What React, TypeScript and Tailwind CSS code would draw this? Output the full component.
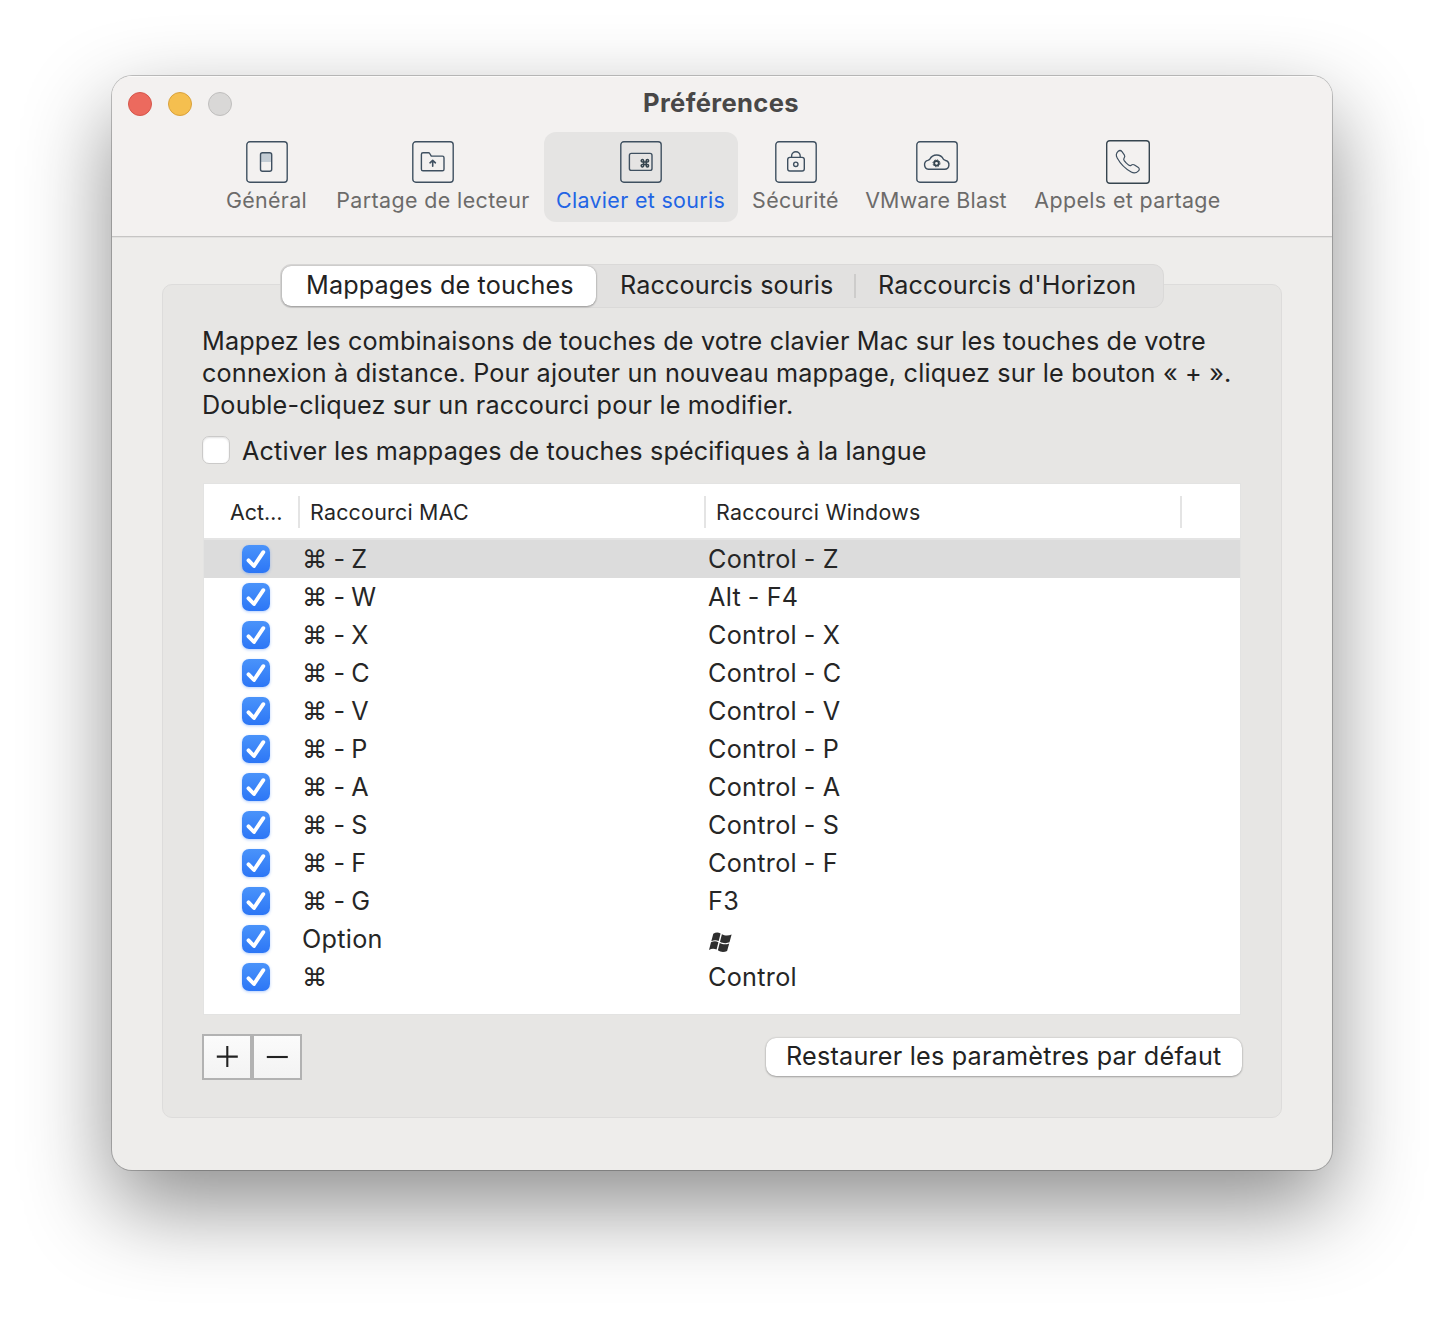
import type { ReactNode } from "react";

const INK = "#36454f";

function Box({ children }: { children: ReactNode }) {
  return (
    <svg width="42" height="42" viewBox="0 0 42 42" fill="none" stroke="#3f5060" strokeWidth="1.4" strokeLinecap="round" strokeLinejoin="round" className="block">
      <rect x="0.8" y="0.8" width="40.4" height="40.4" rx="3" />
      {children}
    </svg>
  );
}

function GeneralIcon() {
  return (
    <Box>
      <path d="M14.5 12h11v9h-11z" fill="#c3ccd4" stroke="none" />
      <rect x="14.5" y="11.8" width="11.2" height="18.4" rx="2" />
    </Box>
  );
}

function FolderIcon() {
  return (
    <Box>
      <path d="M9.4 28.2V13.4c0-1 .6-1.6 1.6-1.6h5.4c.5 0 1 .2 1.3.7l1.6 2.6h11.1c1 0 1.6.6 1.6 1.6v11.5c0 1-.6 1.6-1.6 1.6H11c-1 0-1.6-.6-1.6-1.6z" />
      <path d="M20.7 25.2v-5.4M18 21.8l2.7-2.5 2.7 2.5" strokeWidth="1.6" />
    </Box>
  );
}

function KeyboardIcon() {
  return (
    <Box>
      <rect x="9.4" y="12.4" width="22.6" height="17" rx="2" />
      <path
        d="M23.6 20.9h2.6v2.6h-2.6zM23.6 20.9h-1.1a1.2 1.2 0 1 1 1.1-1.2zM26.2 20.9v-1.2a1.2 1.2 0 1 1 1.2 1.2zM23.6 23.5v1.2a1.2 1.2 0 1 1-1.1-1.2zM26.2 23.5h1.2a1.2 1.2 0 1 1-1.2 1.2z"
        strokeWidth="1.5"
        stroke={INK}
      />
    </Box>
  );
}

function LockIcon() {
  return (
    <Box>
      <rect x="12.7" y="16.4" width="16.6" height="13.6" rx="2.2" />
      <path d="M16.6 16.2v-1.1a4.3 4.3 0 0 1 8.6 0v1.1" />
      <circle cx="20.8" cy="23.3" r="2.2" />
    </Box>
  );
}

function CloudIcon() {
  return (
    <Box>
      <path d="M12.4 28.3h16.3a4.5 4.5 0 0 0 1-8.8c-1.2-.5-1.7-.4-2.3-1.4a7.7 7.7 0 0 0-13.600.1c-.5.9-1.1.8-2.1 1.2a4.6 4.6 0 0 0 .7 8.9z" />
      <circle cx="20.5" cy="22.3" r="2.3" strokeWidth="1.8" stroke={INK} />
      <circle cx="20.5" cy="22.3" r="3.5" strokeWidth="1" strokeDasharray="1.4 1.35" strokeLinecap="butt" stroke={INK} />
    </Box>
  );
}

function PhoneIcon() {
  return (
    <svg width="44" height="44" viewBox="0 0 44 44" fill="none" stroke="#3f5060" strokeWidth="1.2" strokeLinejoin="round" className="block">
      <rect x="0.7" y="0.7" width="42.6" height="42.6" rx="3" strokeWidth="1.4" stroke={INK} />
      <path d="M12.2 11.2c1.5-1.1 2.9-.7 3.8.5l2.3 3.2c.8 1.2.6 2.2-.2 3.2-.7.9-.5 1.7.1 2.6 1.2 1.7 2.7 3.2 4.4 4.4.9.6 1.7.8 2.6.1 1-.8 2.1-1 3.3-.2l3.5 2.3c1.5 1 1.7 2.3.5 3.5-2.1 2.2-4.6 2.7-7.3 1.2-5.9-3.3-10.8-8.2-14-14-1.4-2.6-1-5 1-6.8z" />
    </svg>
  );
}

function WindowsIcon() {
  return (
    <svg width="23" height="21" viewBox="0 0 23 21" fill="#2e2e2e" className="block">
      <path d="M4.3 1.7C6.8.3 9.2.2 11.6 1.5L9.7 9.1C7.3 7.8 4.8 7.9 2.3 9.2z" />
      <path d="M12.9 2.3c2.7 1.5 6.3 1.9 9.7.2l-2.1 7.8c-2.500 1.200-6.700 1.200-9.500-.6z" />
      <path d="M2 10.3c2.6-1.3 5.1-1.3 7.4-.1l-1.8 7.4C5.2 16.3 2.5 16.4 0 17.9z" />
      <path d="M10.7 10.9c2.9 1.7 6.4 1.9 9.5.5l-2.1 7.5c-3 1.5-6.3 1.4-9.2-.6z" />
    </svg>
  );
}

type Tool = { label: string; icon: ReactNode; box: string; text: string; active?: boolean };

const TOOLS: Tool[] = [
  { label: "Général", icon: <GeneralIcon />, box: "w-[108px] mr-px pt-[9px]", text: "tracking-[0.32px] mt-1 mr-px" },
  { label: "Partage de lecteur", icon: <FolderIcon />, box: "w-[216px] pt-[9px]", text: "tracking-[0.4px] mt-1" },
  { label: "Clavier et souris", icon: <KeyboardIcon />, box: "w-[194px] pt-[9px] bg-[#e5e4e3]", text: "tracking-[0.34px] mt-1 mr-px", active: true },
  { label: "Sécurité", icon: <LockIcon />, box: "w-[110px] pt-[9px]", text: "tracking-[0.37px] mt-1 mr-px" },
  { label: "VMware Blast", icon: <CloudIcon />, box: "w-[166px] pt-[9px]", text: "tracking-[0.2px] mt-1 mr-0.5" },
  { label: "Appels et partage", icon: <PhoneIcon />, box: "w-[210px] pt-2", text: "tracking-[0.38px] mt-[3px] mr-px" },
];

const ROWS: [string, ReactNode][] = [
  ["⌘ - Z", "Control - Z"],
  ["⌘ - W", "Alt - F4"],
  ["⌘ - X", "Control - X"],
  ["⌘ - C", "Control - C"],
  ["⌘ - V", "Control - V"],
  ["⌘ - P", "Control - P"],
  ["⌘ - A", "Control - A"],
  ["⌘ - S", "Control - S"],
  ["⌘ - F", "Control - F"],
  ["⌘ - G", "F3"],
  ["Option", <WindowsIcon key="win" />],
  ["⌘", "Control"],
];

function CheckedBox() {
  return (
    <span className="flex size-7 flex-none items-center justify-center rounded-[7px] bg-linear-to-b from-[#4a93fa] to-[#2c76f6] shadow-[0_1px_3px_rgba(44,118,246,0.35)]">
      <svg width="28" height="28" viewBox="0 0 28 28" fill="none" stroke="#fff" strokeWidth="3.9" strokeLinecap="round" strokeLinejoin="round">
        <path d="M6.5 15.3L12 21L21.3 7.2" />
      </svg>
    </span>
  );
}

function TitleBar() {
  return (
    <div className="flex h-14 items-center pl-4">
      <div className="flex w-[104px] gap-4">
        <span className="size-6 rounded-full border border-[#d5564b] bg-[#ec6a5e]" />
        <span className="size-6 rounded-full border border-[#d9a13c] bg-[#f5bf4f]" />
        <span className="size-6 rounded-full border border-[#bfbebd] bg-[#d9d8d7]" />
      </div>
      <h1 className="mr-[122px] flex-1 pb-0.5 text-center text-[25.6px] leading-8 font-bold tracking-[0.36px] text-[#484747]">Préférences</h1>
    </div>
  );
}

function Toolbar() {
  return (
    <nav className="flex gap-[3px] pl-[101px]">
      {TOOLS.map((t) => (
        <button key={t.label} className={`flex h-[90px] flex-none flex-col items-center rounded-xl ${t.box}`}>
          {t.icon}
          <span className={`text-[21.4px] leading-[26px] whitespace-nowrap ${t.text} ${t.active ? "text-[#2264e5]" : "text-[#6c6b6a]"}`}>{t.label}</span>
        </button>
      ))}
    </nav>
  );
}

function Tabs() {
  return (
    <div className="relative z-10 mx-auto flex h-11 w-[884px] items-center rounded-[11px] border border-[#dad9d8] bg-[#e2e1e0] pl-px text-[25.2px] whitespace-nowrap text-[#222]">
      <button className="flex h-10 w-[314px] items-start rounded-[9px] bg-white pl-6 text-left leading-[38px] tracking-[0.14px] shadow-[0_0_2px_rgba(0,0,0,0.3),0_1px_2px_rgba(0,0,0,0.25)]">
        Mappages de touches
      </button>
      <button className="flex h-10 w-[258px] items-start pl-6 text-left leading-[38px] tracking-[0.11px]">Raccourcis souris</button>
      <span className="h-6 w-0.5 bg-[#cdcccb]" />
      <button className="flex h-10 items-start pl-[22px] text-left leading-[38px] tracking-[0.15px]">Raccourcis d'Horizon</button>
    </div>
  );
}

function MappingTable() {
  return (
    <div className="mt-[18px] ml-0.5 h-[530px] w-[1036px] bg-white shadow-[0_0_0_1px_#e3e3e2]">
      <div className="flex h-14 items-start border-b-2 border-[#e4e4e4] pt-3 text-[21.4px] leading-8 text-[#262626]">
        <span className="h-8 w-24 flex-none border-r-2 border-[#e4e4e4] pl-[26px]">Act…</span>
        <span className="h-8 w-[406px] flex-none border-r-2 border-[#e4e4e4] pl-[10px] tracking-[0.24px]">Raccourci MAC</span>
        <span className="h-8 w-[476px] flex-none border-r-2 border-[#e4e4e4] pl-[10px] tracking-[0.27px]">Raccourci Windows</span>
      </div>
      {ROWS.map(([mac, win], i) => (
        <div key={mac} className={`flex h-[38px] items-center pl-[38px] text-[25.2px] leading-[38px] tracking-[0.3px] text-[#262626] ${i === 0 ? "bg-[#dcdcdc]" : ""}`}>
          <CheckedBox />
          <span className="w-[438px] flex-none pl-8 [word-spacing:-1.5px]">{mac}</span>
          {typeof win === "string" ? <span className="[word-spacing:-0.5px]">{win}</span> : <span className="mt-1.5 ml-px">{win}</span>}
        </div>
      ))}
    </div>
  );
}

function Footer() {
  return (
    <div className="mt-5 flex items-start">
      {["M3.8 13.6h21M14.3 3.1v21", "M3.8 14h21"].map((d) => (
        <button key={d} className="flex h-[46px] w-[50px] items-center justify-center border-2 border-[#b2b2b2] bg-linear-to-b from-[#fbfbfb] to-[#f3f3f3]">
          <svg width="28" height="28" viewBox="0 0 28 28" fill="none" stroke="#222" strokeWidth="2.1" className="block">
            <path d={d} />
          </svg>
        </button>
      ))}
      <button className="mt-1 ml-auto flex h-[38px] w-[476px] items-start rounded-[10px] bg-white pl-5 text-left text-[25.2px] leading-[36px] tracking-[0.215px] whitespace-nowrap text-[#222] shadow-[0_0_2px_rgba(0,0,0,0.22),0_1px_2px_rgba(0,0,0,0.25)]">
        Restaurer les paramètres par défaut
      </button>
    </div>
  );
}

export default function App() {
  return (
    <div className="flex h-[1318px] w-full items-start justify-center overflow-hidden bg-white pt-[76px] font-['Inter',sans-serif]">
      <div className="h-[1094px] w-[1220px] overflow-hidden rounded-[20px] bg-[#eeedeb] shadow-[0_0_0_1px_rgba(0,0,0,0.22),0_36px_88px_rgba(0,0,0,0.45)]">
        <header className="h-[161px] border-b border-[#c6c5c4] bg-[#f3f1f0] shadow-[inset_0_1px_0_#fbfaf9,0_1px_0_#e2e1e0]">
          <TitleBar />
          <Toolbar />
        </header>
        <main className="px-[50px] pt-[27px]">
          <Tabs />
          <section className="-mt-6 h-[834px] rounded-[10px] border border-[#dddcdb] bg-[#e7e6e4] px-[39px] pt-10">
            <p className="text-[25.2px] leading-8 whitespace-nowrap text-[#222]">
              <span className="block tracking-[0.161px]">Mappez les combinaisons de touches de votre clavier Mac sur les touches de votre</span>
              <span className="block tracking-[0.183px]">connexion à distance. Pour ajouter un nouveau mappage, cliquez sur le bouton « + ».</span>
              <span className="block tracking-[0.179px]">Double-cliquez sur un raccourci pour le modifier.</span>
            </p>
            <label className="mt-[15px] flex h-[30px] items-start text-[25.2px] leading-[30px] tracking-[0.135px] text-[#222]">
              <span className="mr-3 size-7 rounded-[7px] border border-[#cbcac9] bg-white shadow-[inset_0_1px_2px_rgba(0,0,0,0.12)]" />
              Activer les mappages de touches spécifiques à la langue
            </label>
            <MappingTable />
            <Footer />
          </section>
        </main>
      </div>
    </div>
  );
}
